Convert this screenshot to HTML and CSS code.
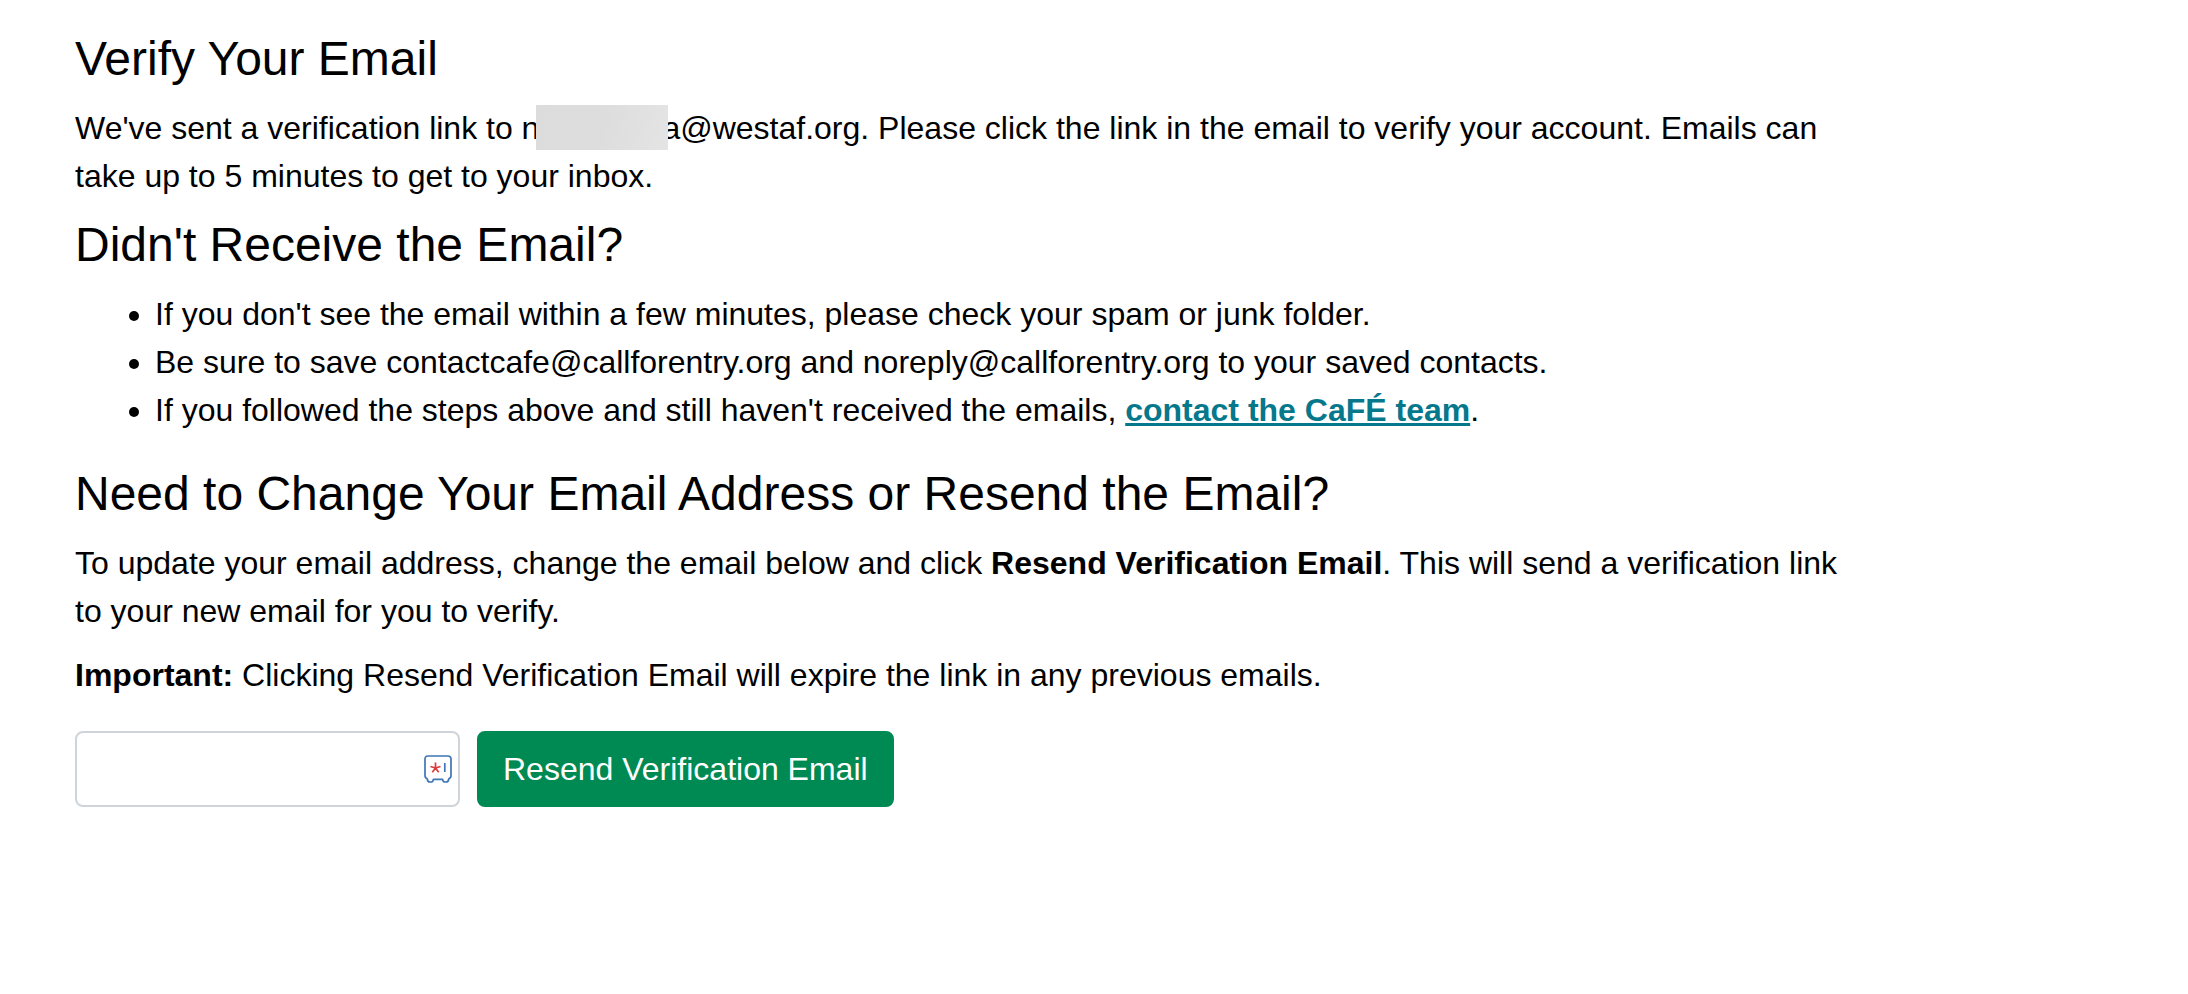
FILE: index.html
```html
<!DOCTYPE html>
<html lang="en">
<head>
<meta charset="utf-8">
<title>Verify Your Email</title>
<link rel="stylesheet" href="styles.css">
</head>
<body>
<main class="page">
  <h1 class="heading">Verify Your Email</h1>
  <p class="text">We've sent a verification link to n<span class="redacted"></span>a@westaf.org. Please click the link in the email to verify your account. Emails can take up to 5 minutes to get to your inbox.</p>

  <h2 class="heading">Didn't Receive the Email?</h2>
  <ul class="tips">
    <li>If you don't see the email within a few minutes, please check your spam or junk folder.</li>
    <li>Be sure to save contactcafe@callforentry.org and noreply@callforentry.org to your saved contacts.</li>
    <li>If you followed the steps above and still haven't received the emails, <a class="link" href="#contact">contact the CaFÉ team</a>.</li>
  </ul>

  <h2 class="heading">Need to Change Your Email Address or Resend the Email?</h2>
  <p class="text">To update your email address, change the email below and click <strong>Resend Verification Email</strong>. This will send a verification link to your new email for you to verify.</p>
  <p class="text"><strong>Important:</strong> Clicking Resend Verification Email will expire the link in any previous emails.</p>

  <form class="resend">
    <div class="field">
      <input class="input" type="email" aria-label="Email address">
      <svg class="vault" viewBox="0 0 28 28" fill="none" aria-hidden="true">
        <path d="M4 1H24Q27 1 27 4V20.500Q27 23 24.800 23.800Q24.500 27 22 27H21Q19 27 18.600 24.300H9.400Q9 27 7 27H6Q3.500 27 3.200 23.800Q1 23 1 20.500V4Q1 1 4 1Z" stroke="#3f76b5" stroke-width="1.700" stroke-linejoin="round"/>
        <path d="M20.800 8V17" stroke="#3f76b5" stroke-width="1.700"/>
        <path d="M11.500 13V7.500M11.500 13L6.500 11.500M11.500 13L16.500 11.500M11.500 13L8.300 17.300M11.500 13L14.700 17.300" stroke="#dc3a3a" stroke-width="1.700"/>
      </svg>
    </div>
    <button class="button" type="submit">Resend Verification Email</button>
  </form>
</main>
</body>
</html>
```
FILE: styles.css
```css
body {
  margin: 0;
  background: #fff;
  color: #000;
  font: 32px/48px "Liberation Sans", Arial, sans-serif;
}

.page {
  padding: 30px 15% 32px 75px;
}

.heading {
  margin: 0 0 16px;
  font-size: 48px;
  line-height: 58px;
  font-weight: 400;
}

.text {
  margin: 0 0 16px;
}

.redacted {
  position: relative;
  display: inline-block;
  width: 132px;
  height: 45px;
  margin: 1px -6px 0 -3px;
  vertical-align: top;
  background: linear-gradient(100deg, #dcdcdc, #dddddd 50%, #e4e4e4);
}

.tips {
  margin: 0 0 31px;
  padding-left: 80px;
}

.link {
  color: #06788c;
  font-weight: 700;
  text-decoration: underline;
  text-decoration-thickness: 3px;
}

.resend {
  display: flex;
  align-items: center;
  gap: 17px;
  margin-top: 32px;
}

.field {
  position: relative;
}

.input {
  display: block;
  box-sizing: border-box;
  width: 385px;
  height: 76px;
  padding: 12px 48px 12px 24px;
  border: 2px solid #ced4da;
  border-radius: 8px;
  background: #fff;
  font: inherit;
}

.vault {
  position: absolute;
  top: 24px;
  right: 8px;
  width: 28px;
  height: 28px;
}

.button {
  padding: 12px 24px;
  border: 2px solid #008a53;
  border-radius: 8px;
  background: #008a53;
  color: #fff;
  font: inherit;
}
```
